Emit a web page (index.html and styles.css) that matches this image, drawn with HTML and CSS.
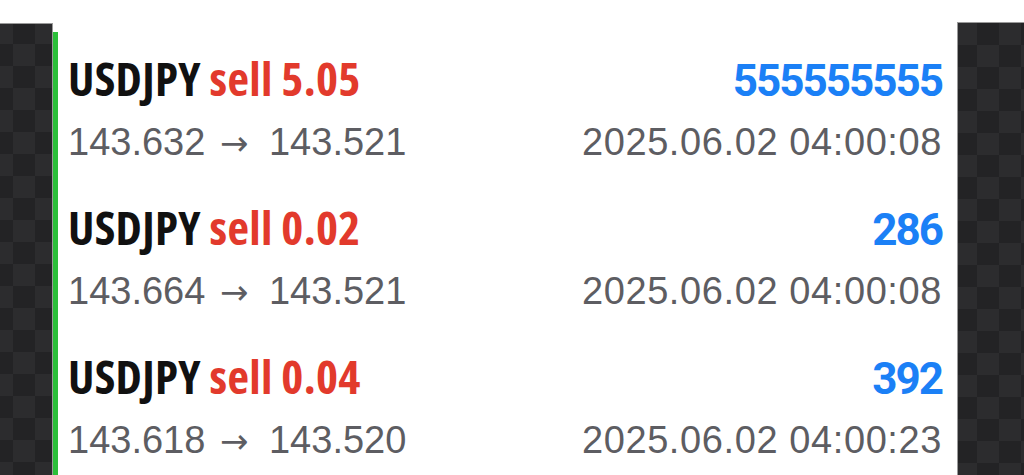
FILE: index.html
```html
<!DOCTYPE html>
<html>
<head>
<meta charset="utf-8">
<link rel="stylesheet" href="styles.css">
</head>
<body>
<div class="topbar"></div>
<div class="main">
  <div class="side side-left"></div>
  <div class="content">
    <div class="list">
      <div class="row">
        <div class="line">
          <span class="title"><span class="sym">USDJPY</span> <span class="sell">sell 5.05</span></span>
          <span class="ticket">555555555</span>
        </div>
        <div class="line sub">
          <span class="prices">143.632 <span class="arrow">→</span> 143.521</span>
          <span class="time">2025.06.02 04:00:08</span>
        </div>
      </div>
      <div class="row">
        <div class="line">
          <span class="title"><span class="sym">USDJPY</span> <span class="sell">sell 0.02</span></span>
          <span class="ticket">286</span>
        </div>
        <div class="line sub">
          <span class="prices">143.664 <span class="arrow">→</span> 143.521</span>
          <span class="time">2025.06.02 04:00:08</span>
        </div>
      </div>
      <div class="row">
        <div class="line">
          <span class="title"><span class="sym">USDJPY</span> <span class="sell">sell 0.04</span></span>
          <span class="ticket">392</span>
        </div>
        <div class="line sub">
          <span class="prices">143.618 <span class="arrow">→</span> 143.520</span>
          <span class="time">2025.06.02 04:00:23</span>
        </div>
      </div>
    </div>
  </div>
  <div class="side side-right"></div>
</div>
</body>
</html>
```
FILE: styles.css
```css
html, body {
  margin: 0;
  padding: 0;
  background: #ffffff;
  height: 475px;
  overflow: hidden;
}
.topbar {
  height: 23px;
  background: #ffffff;
}
.main {
  display: flex;
  height: 452px;
}
.side {
  background-color: #2a2a2c;
  background-image: conic-gradient(#232325 0 25%, #2c2c2e 0 50%, #232325 0 75%, #2c2c2e 0);
  background-size: 44px 44px;
  border-top: 1px solid #9a9a9a;
}
.side-left {
  width: 52px;
  border-right: 1px solid #9a9a9a;
  background-position: -9px -2px;
}
.side-right {
  width: 66px;
  margin-top: -1px;
  border-left: 1px solid #9a9a9a;
  background-position: -3px 0;
}
.content {
  flex: 1;
  padding-top: 9px;
  padding-right: 15px;
  background: #ffffff;
}
.list {
  border-left: 5px solid #2cbf3a;
  padding-left: 10px;
  height: 100%;
}
.row {
  padding: 22px 0 19px;
  height: 108px;
}
.line {
  display: flex;
  justify-content: space-between;
  align-items: baseline;
  height: 48px;
  line-height: 48px;
}
.line.sub {
  margin-top: 20px;
  height: 40px;
  line-height: 40px;
}
.title {
  font-family: "Open Sans", sans-serif;
  font-stretch: 75%;
  font-weight: 700;
  font-size: 47px;
  letter-spacing: 0.3px;
}
.sym {
  color: #111111;
}
.sell {
  color: #e23a2c;
}
.ticket {
  font-family: Roboto, sans-serif;
  font-weight: 700;
  font-size: 44px;
  letter-spacing: -2px;
  color: #1b80f6;
}
.prices, .time {
  font-family: "Liberation Sans", sans-serif;
  font-size: 38px;
  color: #5d5d62;
}
.time {
  letter-spacing: 0.6px;
}
.arrow {
  display: inline-block;
  font-family: "DejaVu Sans", sans-serif;
  font-size: 34px;
  margin: 0 10px 0 4px;
}
```
